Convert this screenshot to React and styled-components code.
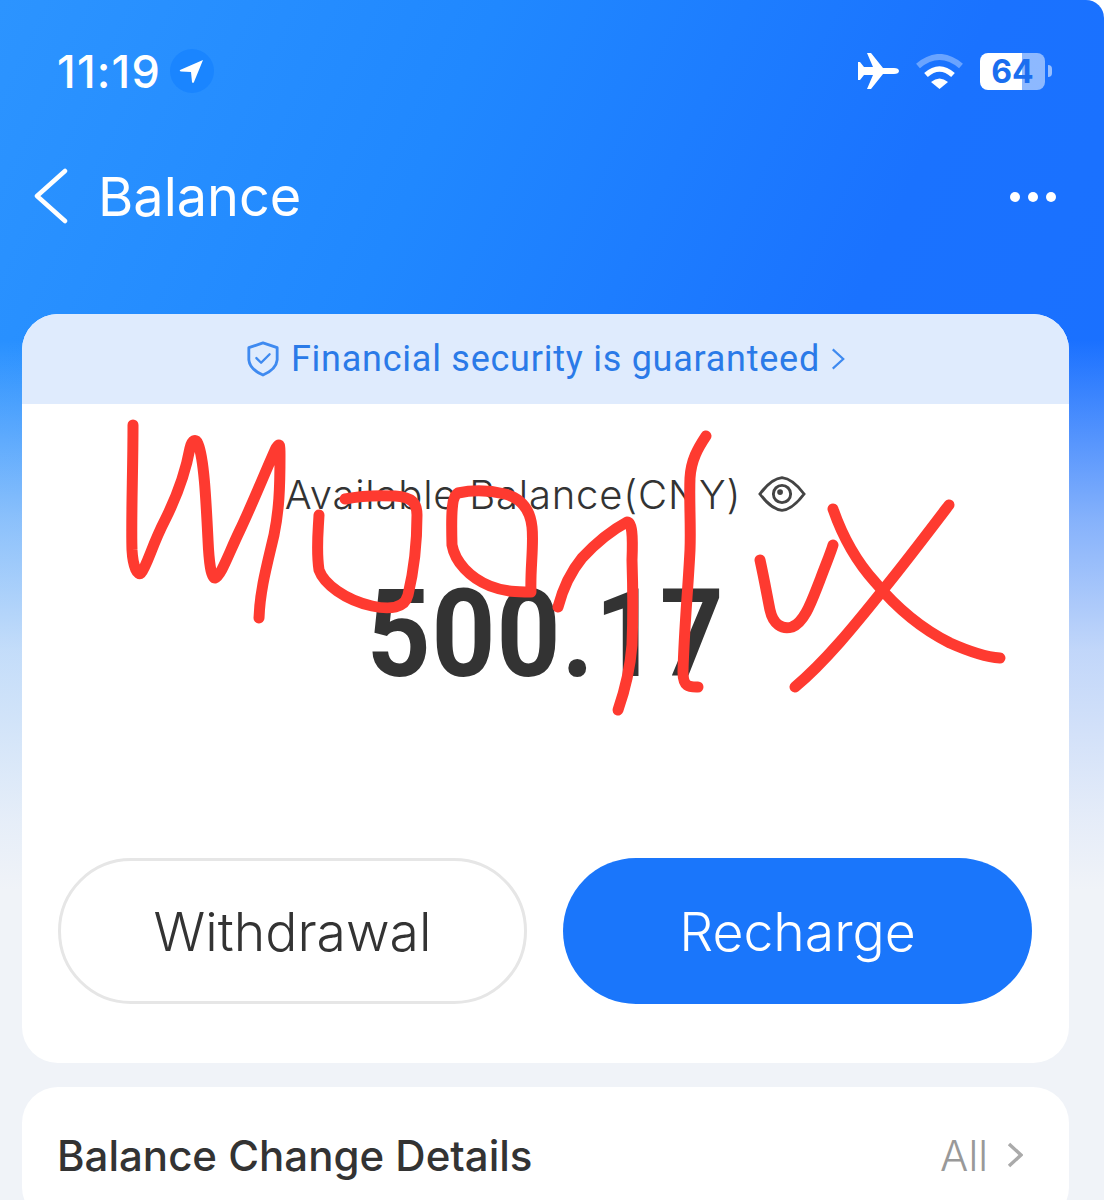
import styled, { createGlobalStyle } from "styled-components";

const GlobalStyle = createGlobalStyle`
  html, body {
    margin: 0;
    padding: 0;
    background: #fff;
  }
  body {
    font-family: Roboto, "Liberation Sans", sans-serif;
  }
`;

const Screen = styled.div`
  position: relative;
  width: 1104px;
  height: 1200px;
  overflow: hidden;
  border-top-right-radius: 18px;
  background:
    linear-gradient(
      180deg,
      rgba(240, 243, 248, 0) 340px,
      rgba(240, 243, 248, 0.5) 520px,
      rgba(240, 243, 248, 0.78) 650px,
      rgba(240, 243, 248, 0.95) 820px,
      #f0f3f8 890px
    ),
    linear-gradient(115deg, #2c94ff 0%, #2088ff 30%, #1a72ff 60%, #1a6eff 100%);
`;

const StatusBar = styled.div`
  height: 142px;
  display: flex;
  align-items: center;
  justify-content: space-between;
  padding: 0 59px 0 57px;
  color: #fff;
`;

const TimeGroup = styled.div`
  display: flex;
  align-items: center;
  gap: 9px;
`;

const Time = styled.span`
  font-family: Inter, sans-serif;
  font-size: 45px;
  font-weight: 500;
  letter-spacing: 1.2px;
`;

const LocationBadge = styled.span`
  width: 44px;
  height: 44px;
  border-radius: 50%;
  background: #1a85ff;
  display: flex;
  align-items: center;
  justify-content: center;
`;

const Indicators = styled.div`
  display: flex;
  align-items: center;
  gap: 17px;
`;

const Battery = styled.div`
  position: relative;
  width: 65px;
  height: 37px;
  border-radius: 8px;
  background: linear-gradient(90deg, #fff 65%, rgba(255, 255, 255, 0.5) 65%);
  display: flex;
  align-items: center;
  justify-content: center;
  font-family: Inter, sans-serif;
  font-size: 32px;
  font-weight: 700;
  color: #1a6eef;

  &::after {
    content: "";
    position: absolute;
    right: -7px;
    top: 12px;
    width: 4px;
    height: 12px;
    border-radius: 0 5px 5px 0;
    background: rgba(255, 255, 255, 0.55);
  }
`;

const NavBar = styled.div`
  height: 108px;
  display: flex;
  align-items: center;
  padding: 0 48px 0 33px;
  color: #fff;
`;

const NavTitle = styled.span`
  margin-left: 29px;
  font-family: Inter, sans-serif;
  font-size: 54px;
  font-weight: 400;
  flex: 1;
`;

const Dots = styled.div`
  display: flex;
  gap: 8px;
  margin-top: 2px;
`;

const Dot = styled.span`
  width: 10px;
  height: 10px;
  border-radius: 50%;
  background: #fff;
`;

const Content = styled.div`
  margin-top: 64px;
  padding: 0 35px 0 22px;
  display: flex;
  flex-direction: column;
  gap: 24px;
`;

const Card = styled.div`
  background: #fff;
  border-radius: 36px;
  overflow: hidden;
`;

const Banner = styled.div`
  height: 90px;
  background: #dfebfd;
  color: #2a7ae8;
  display: flex;
  align-items: center;
  justify-content: center;
  gap: 11px;
  font-size: 36px;
  font-weight: 400;
  letter-spacing: 0.75px;
`;

const BalanceBody = styled.div`
  height: 659px;
  display: flex;
  flex-direction: column;
  align-items: center;
`;

const BalanceLabel = styled.div`
  margin-top: 65px;
  height: 50px;
  display: flex;
  align-items: center;
  gap: 17px;
  font-family: Inter, sans-serif;
  font-size: 40px;
  font-weight: 300;
  letter-spacing: 0.8px;
  color: #333;
`;

const Amount = styled.div`
  margin-top: 44px;
  font-size: 122px;
  line-height: 144px;
  font-weight: 700;
  color: #333;
  letter-spacing: 1px;
  transform: scaleX(0.915);
`;

const Buttons = styled.div`
  margin-top: 151px;
  width: 100%;
  box-sizing: border-box;
  padding: 0 37px 0 36px;
  display: grid;
  grid-template-columns: 1fr 1fr;
  gap: 36px;
`;

const Button = styled.div`
  height: 146px;
  box-sizing: border-box;
  border-radius: 73px;
  border: ${(p) => (p.$primary ? "none" : "3px solid #e6e6e6")};
  background: ${(p) => (p.$primary ? "#1a76fb" : "#fff")};
  color: ${(p) => (p.$primary ? "#fff" : "#333")};
  display: flex;
  align-items: center;
  justify-content: center;
  font-family: Inter, sans-serif;
  font-size: 53.5px;
  font-weight: 350;
`;

const DetailsRow = styled.div`
  height: 136px;
  padding: 0 46px 0 35px;
  display: flex;
  align-items: center;
  justify-content: space-between;
`;

const DetailsTitle = styled.span`
  font-family: Inter, sans-serif;
  font-size: 42px;
  font-weight: 500;
  color: #333;
`;

const AllLink = styled.span`
  display: flex;
  align-items: center;
  gap: 19px;
  font-family: Inter, sans-serif;
  font-size: 42px;
  font-weight: 300;
  color: #999;
`;

const Scribble = styled.svg`
  position: absolute;
  left: 0;
  top: 0;
  pointer-events: none;
  fill: none;
  stroke: #fe3a30;
  stroke-width: 11px;
  stroke-linecap: round;
  stroke-linejoin: round;
`;

const strokes = [
  "M133 425 C133 470 131 520 132 550 C133 568 138 576 141 573 C147 566 152 545 165 520 C176 498 186 470 190 448 C192 440 196 438 198 444 C204 458 206 500 208 540 C209 562 211 578 215 578 C221 576 228 555 240 530 C252 505 266 470 276 448 C280 442 280 445 280 455 C280 490 279 510 274 535 C267 565 260 590 259 618",
  "M319 515 C318 535 316 550 319 570 C324 584 345 600 372 606 C390 610 405 608 408 595 C414 570 417 540 417 515 C417 503 412 497 395 496 C375 495 360 496 345 499",
  "M531 592 C530 570 534 545 532 527 C530 508 520 498 505 494 C488 490 472 490 458 493 C452 496 451 510 452 545 C455 562 470 578 490 586 C505 592 518 592 531 592",
  "M558 607 C562 592 568 575 582 558 C595 544 612 530 627 522 C632 522 633 535 632 560 C633 590 633 620 632 645 C630 670 625 690 618 710",
  "M706 436 C698 448 691 460 690 478 C689 500 691 525 690 550 C688 590 684 630 683 672 C683 688 690 687 698 687",
  "M760 560 C764 578 767 595 770 610 C773 624 782 630 792 627 C805 622 812 600 820 580 C825 566 830 555 833 545",
  "M949 505 C930 530 905 563 883 590 C855 625 825 662 795 687",
  "M833 509 C842 535 855 560 875 582 C895 606 920 628 950 643 C968 651 985 657 1000 658",
];

export default function App() {
  return (
    <>
      <GlobalStyle />
      <Screen>
        <StatusBar>
          <TimeGroup>
            <Time>11:19</Time>
            <LocationBadge>
              <svg width="26" height="26" viewBox="0 0 26 26" fill="#fff">
                <path d="M24 2 L1 12 Q0 13 2 13.5 L12 14 L13 24 Q14 26 15 24 Z" />
              </svg>
            </LocationBadge>
          </TimeGroup>
          <Indicators>
            <svg width="41" height="36" viewBox="0 0 41 36" fill="#fff">
              <path d="M41 18c0-2-2-3-5-3H25L13 0H9l6 14H6L2 9H0v18h2l4-5h9L9 36h4l12-15h11c3 0 5-1 5-3z" />
            </svg>
            <svg width="47" height="35" viewBox="0 0 47 35" fill="none" stroke="#fff">
              <path d="M2 12Q23.5-6 45 12" strokeWidth="6" opacity="0.35" />
              <path d="M10 21Q23.5 9 37 21" strokeWidth="5.5" />
              <path d="M15 28Q23.5 21 32 28L23.5 35Z" fill="#fff" stroke="none" />
            </svg>
            <Battery>64</Battery>
          </Indicators>
        </StatusBar>

        <NavBar>
          <svg width="36" height="56" viewBox="0 0 36 56" fill="none" stroke="#fff" strokeWidth="4.5" strokeLinecap="round" strokeLinejoin="round">
            <path d="M32 3 L4 28 L32 53" />
          </svg>
          <NavTitle>Balance</NavTitle>
          <Dots>
            <Dot />
            <Dot />
            <Dot />
          </Dots>
        </NavBar>

        <Content>
          <Card>
            <Banner>
              <svg width="34" height="38" viewBox="0 0 36 38" fill="none" stroke="#3f8af0" strokeWidth="3" strokeLinecap="round" strokeLinejoin="round">
                <path d="M18 2 L33 7 V20 Q32 30 18 36 Q4 30 3 20 V7 Z" />
                <path d="M11 18 L16 23 L25 14" strokeWidth="2.5" />
              </svg>
              <span>Financial security is guaranteed</span>
              <svg width="14" height="26" viewBox="0 0 16 26" fill="none" stroke="#3f8af0" strokeWidth="2.5">
                <path d="M2 2 L14 13 L2 24" />
              </svg>
            </Banner>
            <BalanceBody>
              <BalanceLabel>
                <span>Available Balance(CNY)</span>
                <svg width="48" height="38" viewBox="0 0 50 38" fill="none" stroke="#444" strokeWidth="3">
                  <path d="M2 19 Q14 3 25 2 Q36 3 48 19 Q36 35 25 36 Q14 35 2 19 Z" />
                  <circle cx="25" cy="19" r="9" />
                  <circle cx="23" cy="17" r="3" fill="#444" stroke="none" />
                </svg>
              </BalanceLabel>
              <Amount>500.17</Amount>
              <Buttons>
                <Button>Withdrawal</Button>
                <Button $primary>Recharge</Button>
              </Buttons>
            </BalanceBody>
          </Card>
          <Card>
            <DetailsRow>
              <DetailsTitle>Balance Change Details</DetailsTitle>
              <AllLink>
                All
                <svg width="16" height="26" viewBox="0 0 16 26" fill="none" stroke="#aaa" strokeWidth="3.5">
                  <path d="M2 2 L14 13 L2 24" />
                </svg>
              </AllLink>
            </DetailsRow>
          </Card>
        </Content>

        <Scribble width="1104" height="1200" viewBox="0 0 1104 1200">
          {strokes.map((d) => (
            <path key={d} d={d} />
          ))}
        </Scribble>
      </Screen>
    </>
  );
}
